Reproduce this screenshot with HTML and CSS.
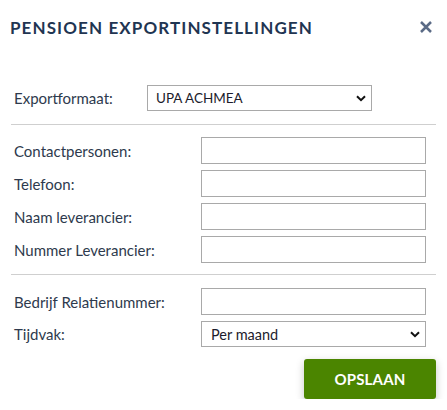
FILE: index.html
```html
<!DOCTYPE html>
<html lang="nl">
<head>
<meta charset="utf-8">
<title>Pensioen exportinstellingen</title>
<link rel="stylesheet" href="styles.css">
</head>
<body>
<div class="dialog">
  <header class="dialog-header">
    <h1 class="dialog-title">PENSIOEN EXPORTINSTELLINGEN</h1>
    <button class="close" aria-label="Sluiten">
      <svg width="12" height="12" viewBox="0 0 12 12"><path d="M1 1 L11 11 M11 1 L1 11" stroke="#5b6b86" stroke-width="2.5" stroke-linecap="butt"/></svg>
    </button>
  </header>

  <section class="group group-format">
    <div class="row">
      <label class="label label-narrow">Exportformaat:</label>
      <div class="select-wrap select-format">
        <select class="select"><option>UPA ACHMEA</option></select>
        <svg class="chev" width="10" height="7" viewBox="0 0 10 7"><path d="M1 1.2 L5 5.2 L9 1.2" fill="none" stroke="#111" stroke-width="2"/></svg>
      </div>
    </div>
  </section>

  <section class="group">
    <div class="row"><label class="label">Contactpersonen:</label><input class="input" type="text"></div>
    <div class="row"><label class="label">Telefoon:</label><input class="input" type="text"></div>
    <div class="row"><label class="label">Naam leverancier:</label><input class="input" type="text"></div>
    <div class="row"><label class="label">Nummer Leverancier:</label><input class="input" type="text"></div>
  </section>

  <section class="group group-last">
    <div class="row"><label class="label">Bedrijf Relatienummer:</label><input class="input" type="text"></div>
    <div class="row row-select">
      <label class="label">Tijdvak:</label>
      <div class="select-wrap select-wide">
        <select class="select"><option>Per maand</option></select>
        <svg class="chev" width="10" height="7" viewBox="0 0 10 7"><path d="M1 1.2 L5 5.2 L9 1.2" fill="none" stroke="#111" stroke-width="2"/></svg>
      </div>
    </div>
  </section>

  <footer class="actions">
    <button class="btn-save">OPSLAAN</button>
  </footer>
</div>
</body>
</html>
```
FILE: styles.css
```css
* { box-sizing: border-box; }
html, body { margin: 0; padding: 0; background: #fff; }
body {
  font-family: Lato, "Noto Sans", "Liberation Sans", sans-serif;
  color: #2e3a4d;
}
.dialog {
  width: 447px;
  padding: 0 11px 0 11px;
}
.dialog-header {
  display: flex;
  align-items: center;
  justify-content: space-between;
  height: 52px;
  padding-top: 2px;
  margin-left: -1px;
}
.dialog-title {
  margin: 0;
  font-size: 17px;
  font-weight: 700;
  letter-spacing: 1.1px;
  color: #1f3552;
}
.close {
  border: 0;
  background: none;
  padding: 0;
  margin-right: 4px;
  width: 12px;
  height: 12px;
  display: flex;
}
.group {
  border-bottom: 1px solid #cfcfcf;
  display: flex;
  flex-direction: column;
  gap: 6px;
  padding: 12px 0 11px 0;
}
.group-format { padding: 33px 0 13px 0; }
.group-last { border-bottom: 0; padding-top: 13px; padding-bottom: 0; }
.row {
  display: flex;
  align-items: center;
  padding-left: 3px;
}
.label {
  width: 187px;
  font-size: 15px;
  color: #2e3a4d;
}
.label-narrow { width: 133px; }
.input {
  width: 225px;
  height: 27px;
  border: 1px solid #a9a9a9;
  border-radius: 0;
  background: #fff;
  margin: 0;
}
.select-wrap {
  position: relative;
  width: 225px;
}
.select-format { height: 26px; }
.select-wide { height: 26px; }
.select {
  appearance: none;
  -webkit-appearance: none;
  width: 100%;
  height: 100%;
  border: 1px solid #a9a9a9;
  border-radius: 0;
  background: #fff;
  font-family: inherit;
  font-size: 14px;
  color: #1c1c2c;
  padding: 0 0 0 8px;
  margin: 0;
}
.select-format .select { font-size: 13.5px; }
.select-wide .select { padding-left: 9px; font-size: 14.5px; }
.chev {
  position: absolute;
  right: 6px;
  top: 10px;
  pointer-events: none;
}
.actions {
  display: flex;
  justify-content: flex-end;
  padding-top: 12px;
}
.btn-save {
  width: 132px;
  height: 40px;
  border: 0;
  border-radius: 3px;
  background: #4b8500;
  color: #fff;
  font-family: inherit;
  font-size: 15px;
  font-weight: 700;
  letter-spacing: 0.2px;
  box-shadow: 0 3px 8px rgba(0,0,0,0.22);
}
```
